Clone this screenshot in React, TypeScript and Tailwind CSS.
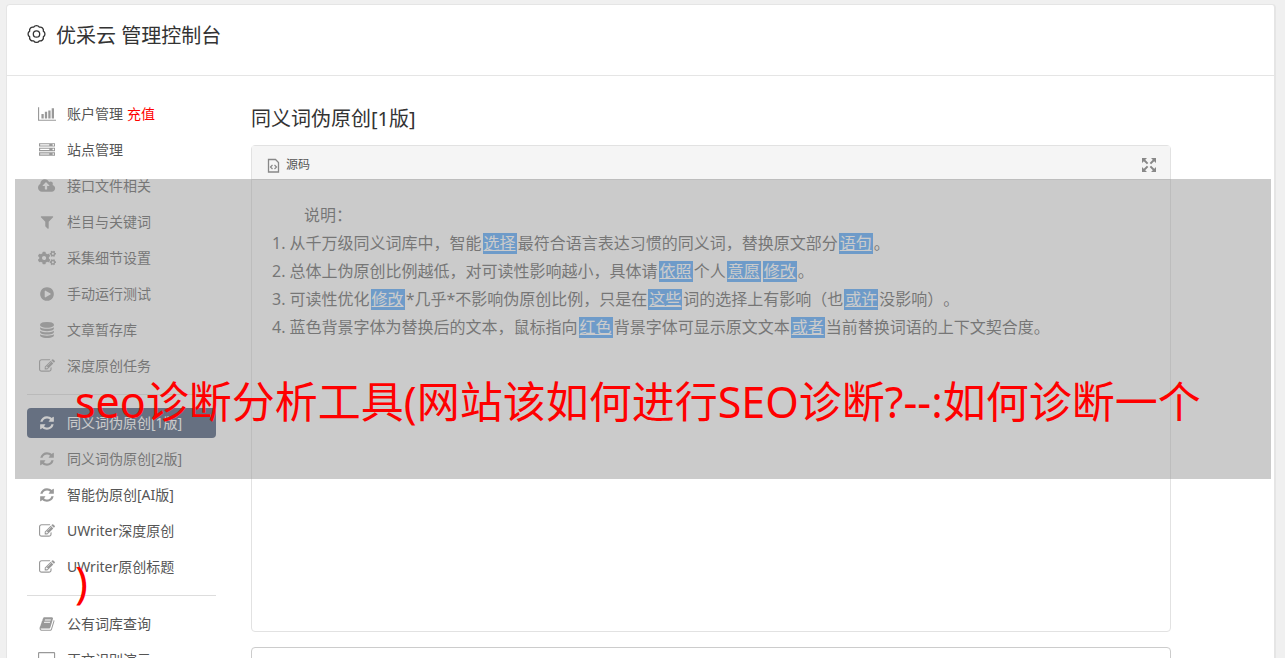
import * as React from 'react';
import { FaCogs } from 'react-icons/fa';

const glyphs = {
  chart: { box: '0 0 2048 1792', d: 'M640 896v512h-256v-512h256zm384-256v768h-256v-768h256zm1024 896v128h-2048v-1536h128v1408h1920zm-640-1024v896h-256v-896h256zm384-256v1152h-256v-1152h256z' },
  server: { box: '0 0 1792 1792', d: 'M128 1408h1024v-128h-1024v128zm0-512h1024v-128h-1024v128zm1568 448q0-40-28-68t-68-28-68 28-28 68 28 68 68 28 68-28 28-68zm-1568-960h1024v-128h-1024v128zm1568 448q0-40-28-68t-68-28-68 28-28 68 28 68 68 28 68-28 28-68zm0-512q0-40-28-68t-68-28-68 28-28 68 28 68 68 28 68-28 28-68zm96 832v384h-1792v-384h1792zm0-512v384h-1792v-384h1792zm0-512v384h-1792v-384h1792z' },
  upload: { box: '0 0 1920 1792', d: 'M1280 864q0-14-9-23l-352-352q-9-9-23-9t-23 9l-351 351q-10 12-10 24 0 14 9 23t23 9h224v352q0 13 9.5 22.5t22.5 9.5h192q13 0 22.5-9.5t9.5-22.5v-352h224q13 0 22.5-9.5t9.5-22.5zm640 288q0 159-112.5 271.5t-271.5 112.5h-1088q-185 0-316.5-131.5t-131.5-316.5q0-130 70-240t188-165q-2-30-2-43 0-212 150-362t362-150q156 0 285.5 87t188.5 231q71-62 166-62 106 0 181 75t75 181q0 76-41 138 130 31 213.5 135.5t83.5 238.5z' },
  filter: { box: '0 0 1792 1792', d: 'M1595 295q17 41-14 70l-493 493v742q0 42-39 59-13 5-25 5-27 0-45-19l-256-256q-19-19-19-45v-486l-493-493q-31-29-14-70 17-39 59-39h1280q42 0 59 39z' },
  play: { box: '0 0 1792 1792', d: 'M896 128q209 0 385.5 103t279.5 279.5 103 385.5-103 385.5-279.5 279.5-385.5 103-385.5-103-279.5-279.5-103-385.5 103-385.5 279.5-279.5 385.5-103zm384 823q32-18 32-55t-32-55l-544-320q-31-19-64-1-32 19-32 56v640q0 37 32 56 16 8 32 8 17 0 32-9z' },
  database: { box: '0 0 1792 1792', d: 'M896 768q237 0 443-43t325-127v170q0 69-103 128t-280 93.5-385 34.5-385-34.5-280-93.5-103-128v-170q119 84 325 127t443 43zm0 768q237 0 443-43t325-127v170q0 69-103 128t-280 93.5-385 34.5-385-34.5-280-93.5-103-128v-170q119 84 325 127t443 43zm0-384q237 0 443-43t325-127v170q0 69-103 128t-280 93.5-385 34.5-385-34.5-280-93.5-103-128v-170q119 84 325 127t443 43zm0-1152q208 0 385 34.5t280 93.5 103 128v128q0 69-103 128t-280 93.5-385 34.5-385-34.5-280-93.5-103-128v-128q0-69 103-128t280-93.5 385-34.5z' },
  edit: { box: '0 0 1792 1792', d: 'M888 1184l116-116-152-152-116 116v56h96v96h56zm440-720q-16-16-33 1l-350 350q-17 17-1 33t33-1l350-350q17-17 1-33zm80 594v190q0 119-84.5 203.5t-203.5 84.5h-832q-119 0-203.5-84.5t-84.5-203.5v-832q0-119 84.5-203.5t203.5-84.5h832q63 0 117 25 15 7 18 23 3 17-9 29l-49 49q-14 14-32 8-23-6-45-6h-832q-66 0-113 47t-47 113v832q0 66 47 113t113 47h832q66 0 113-47t47-113v-126q0-13 9-22l64-64q15-15 35-7t20 29zm-96-738l288 288-672 672h-288v-288zm444 132l-92 92-288-288 92-92q28-28 68-28t68 28l152 152q28 28 28 68t-28 68z' },
  refresh: { box: '0 0 1792 1792', d: 'M1639 1056q0 5-1 7-64 268-268 434.5t-478 166.5q-146 0-282.5-55t-243.5-157l-129 129q-19 19-45 19t-45-19-19-45v-448q0-26 19-45t45-19h448q26 0 45 19t19 45-19 45l-137 137q71 66 161 102t187 36q134 0 250-65t186-179q11-17 53-117 8-23 30-23h192q13 0 22.5 9.5t9.5 22.5zm25-800v448q0 26-19 45t-45 19h-448q-26 0-45-19t-19-45 19-45l138-138q-148-137-349-137-134 0-250 65t-186 179q-11 17-53 117-8 23-30 23h-199q-13 0-22.5-9.5t-9.5-22.5v-7q65-268 270-434.5t480-166.5q146 0 284 55.5t245 156.5l130-129q19-19 45-19t45 19 19 45z' },
  book: { box: '0 0 1792 1792', d: 'M1703 478q40 57 18 129l-275 906q-19 64-76.5 107.5t-122.5 43.5h-923q-77 0-148.5-53.5t-99.5-131.5q-24-67-2-127 0-4 3-27t4-37q1-8-3-21.5t-3-19.5q2-11 8-21t16.5-23.5 16.5-23.5q23-38 45-91.5t30-91.5q3-10 .5-30t-.5-28q3-11 17-28t17-23q21-36 42-92t25-90q1-9-2.5-32t.5-28q4-13 22-30.5t22-22.5q19-26 42.5-84.5t27.5-96.5q1-8-3-25.5t-2-26.5q2-8 9-18t18-23 17-21q8-12 16.5-30.5t15-35 16-36 19.5-32 26.5-23.5 36-11.5 47.5 5.5l-1 3q38-9 51-9h761q74 0 114 56t18 130l-274 906q-36 119-71.5 153.5t-128.5 34.5h-869q-27 0-38 15-11 16-1 43 24 70 144 70h923q29 0 56-15.5t35-41.5l300-987q7-22 5-57 38 15 59 43zm-1064 2q-4 13 2 22.5t20 9.5h608q13 0 25.5-9.5t16.5-22.5l21-64q4-13-2-22.5t-20-9.5h-608q-13 0-25.5 9.5t-16.5 22.5zm-83 256q-4 13 2 22.5t20 9.5h608q13 0 25.5-9.5t16.5-22.5l21-64q4-13-2-22.5t-20-9.5h-608q-13 0-25.5 9.5t-16.5 22.5z' },
  screen: { box: '0 0 1920 1792', d: 'M128 0h1664q128 0 128 128v1100q0 128-128 128h-664v200h160v128h-656v-128h160v-200h-664q-128 0-128-128v-1100q0-128 128-128zm0 128v1100h1664v-1100z' },
};

type Glyph = keyof typeof glyphs;

const Icon = ({ glyph }: { glyph: Glyph | 'cogs' }) => {
  if (glyph === 'cogs') {
    return <FaCogs size={18} />;
  }
  return (
    <svg viewBox={glyphs[glyph].box} className='h-4 w-auto shrink-0' fill='currentColor' aria-hidden='true'>
      <path d={glyphs[glyph].d} fillRule={glyph === 'screen' ? 'evenodd' : 'nonzero'} />
    </svg>
  );
};

type Item = { icon: Glyph | 'cogs', label: string, extra?: string, active?: boolean };

const groups: Item[][] = [
  [
    { icon: 'chart', label: '账户管理', extra: '充值' },
    { icon: 'server', label: '站点管理' },
    { icon: 'upload', label: '接口文件相关' },
    { icon: 'filter', label: '栏目与关键词' },
    { icon: 'cogs', label: '采集细节设置' },
    { icon: 'play', label: '手动运行测试' },
    { icon: 'database', label: '文章暂存库' },
    { icon: 'edit', label: '深度原创任务' },
  ],
  [
    { icon: 'refresh', label: '同义词伪原创[1版]', active: true },
    { icon: 'refresh', label: '同义词伪原创[2版]' },
    { icon: 'refresh', label: '智能伪原创[AI版]' },
    { icon: 'edit', label: 'UWriter深度原创' },
    { icon: 'edit', label: 'UWriter原创标题' },
  ],
  [
    { icon: 'book', label: '公有词库查询' },
    { icon: 'screen', label: '正文识别演示' },
  ],
];

const Sidebar = () => (
  <nav className='w-[189px] shrink-0 text-sm text-[#555]'>
    {groups.map((items, i) => (
      <React.Fragment key={i}>
        {i > 0 && <hr className='my-[13px] border-[#ddd]' />}
        <ul className='flex flex-col gap-1.5'>
          {items.map(item => (
            <li key={item.label}>
              <a
                href='#'
                className={item.active
                  ? 'flex h-[30px] items-center rounded bg-[#35496b] text-white'
                  : 'flex h-[30px] items-center'}
              >
                <span className={item.active
                  ? 'flex w-10 justify-center'
                  : 'flex w-10 justify-center text-[#999]'}
                >
                  <Icon glyph={item.icon} />
                </span>
                <span>{item.label}</span>
                {item.extra && <span className='ml-1 text-[#f00]'>{item.extra}</span>}
              </a>
            </li>
          ))}
        </ul>
      </React.Fragment>
    ))}
  </nav>
);

const Word = ({ children }: { children: React.ReactNode }) => (
  <a href='#' className='mx-px inline-block h-[21px] bg-[#459ffb] px-px leading-5 text-white underline'>{children}</a>
);

const Editor = () => (
  <section className='flex h-[487px] flex-col rounded border border-[#e2e2e2]'>
    <div className='flex h-[34px] shrink-0 items-center justify-between border-b border-[#e2e2e2] bg-[#f5f5f5] px-3.5 pt-1'>
      <button className='flex items-center gap-1.5 text-xs text-[#555]'>
        <svg width='14' height='16' viewBox='0 0 14 16' fill='none' stroke='#888' aria-hidden='true'>
          <path d='M2.5 2.5h7l3 3v9.500h-10z' strokeWidth='1.3' />
          <path d='M6.500 8l-2 2 2 2M8.500 8l2 2-2 2' strokeWidth='1.2' />
        </svg>
        源码
      </button>
      <button aria-label='全屏'>
        <svg width='14' height='14' viewBox='0 0 14 14' fill='#888' stroke='#888' strokeWidth='2' aria-hidden='true'>
          <path d='M0 0h5L0 5zM14 0v5L9 0zM0 14V9l5 5zM14 14H9l5-5z' stroke='none' />
          <path d='M2 2l3.6 3.6M12 2L8.4 5.6M2 12l3.6-3.6M12 12L8.4 8.4' />
        </svg>
      </button>
    </div>
    <div className='px-5 pt-[21px] text-base/7 text-[#555] [text-spacing-trim:space-all]'>
      <p className='indent-8'>说明：</p>
      <p>1. 从千万级同义词库中，智能<Word>选择</Word>最符合语言表达习惯的同义词，替换原文部分<Word>语句</Word>。</p>
      <p>2. 总体上伪原创比例越低，对可读性影响越小，具体请<Word>依照</Word>个人<Word>意愿</Word><Word>修改</Word>。</p>
      <p>3. 可读性优化<Word>修改</Word>*几乎*不影响伪原创比例，只是在<Word>这些</Word>词的选择上有影响（也<Word>或许</Word>没影响）。</p>
      <p>4. 蓝色背景字体为替换后的文本，鼠标指向<Word>红色</Word>背景字体可显示原文文本<Word>或者</Word>当前替换词语的上下文契合度。</p>
    </div>
  </section>
);

const App = () => (
  <div lang='zh-CN' className='relative h-screen overflow-hidden bg-[#f0f0f0] pt-1 pr-[9px] pl-1.5 font-["Noto_Sans","Noto_Sans_CJK_SC",sans-serif]'>
    <div className='min-h-full rounded border border-r-2 border-[#e5e5e5] bg-white'>
      <header className='flex h-[71px] items-start border-b border-[#e5e5e5] px-5 pt-4 text-[#333]'>
        <h1 className='flex items-start gap-2.5 text-xl/[30px]'>
          <svg width='19' height='26' viewBox='-9.500 -13 19 26' fill='none' stroke='currentColor' strokeWidth='1.3' strokeLinejoin='round' aria-hidden='true'>
            <path d='M6.84 -2.83A3.3 3.3 0 0 1 6.84 2.83A3.3 3.3 0 0 1 2.83 6.84A3.3 3.3 0 0 1 -2.83 6.84A3.3 3.3 0 0 1 -6.84 2.83A3.3 3.3 0 0 1 -6.84 -2.83A3.3 3.3 0 0 1 -2.83 -6.84A3.3 3.3 0 0 1 2.83 -6.84A3.3 3.3 0 0 1 6.84 -2.83Z' />
            <circle r='3.2' />
          </svg>
          优采云 管理控制台
        </h1>
      </header>
      <div className='flex gap-[35px] pt-[23px] pr-[103px] pl-5'>
        <Sidebar />
        <main className='min-w-0 grow pt-[5px]'>
          <h2 className='mb-[11px] text-xl/[30px] text-[#333]'>同义词伪原创[1版]</h2>
          <Editor />
          <textarea aria-label='原文' className='mt-[15px] block h-40 w-full resize-none rounded border border-[#ccc]' />
        </main>
      </div>
    </div>

    {/* translucent banner over the console */}
    <div className='absolute top-[179px] right-3.5 left-[15px] h-[300px] bg-[#979797]/50 pt-[133px] pl-[60px]'>
      <p className='whitespace-nowrap text-[43px]/[180px] text-[#f00]'>
        <span className='block'>seo诊断分析工具(网站该如何进行SEO诊断?--:如何诊断一个</span>
        <span className='block'>)</span>
      </p>
    </div>
  </div>
);

export default App;
